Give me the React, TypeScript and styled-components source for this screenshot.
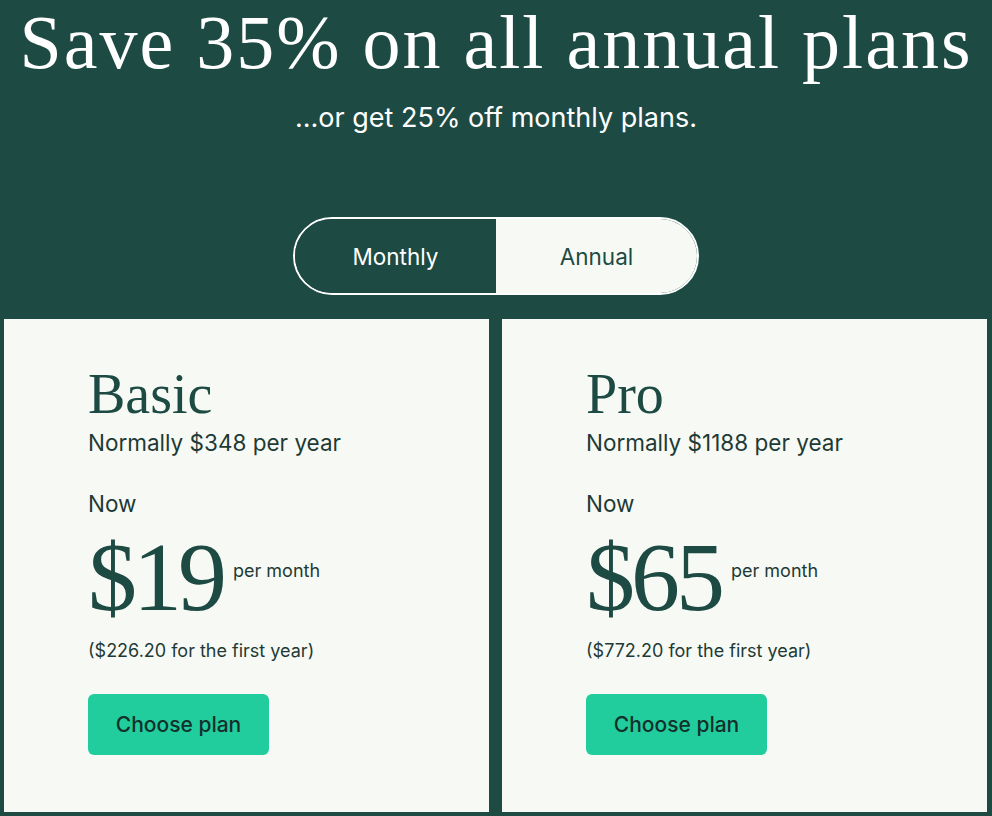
import styled, { createGlobalStyle } from 'styled-components';

const GlobalStyle = createGlobalStyle`
	html, body {
		margin: 0;
		padding: 0;
		background-color: #1d4a43;
	}
	* {
		box-sizing: border-box;
	}
`;

const plans = [
	{ name: 'Basic', normally: '$348', price: '$19', firstYear: '$226.20' },
	{ name: 'Pro', normally: '$1188', price: '$65', firstYear: '$772.20' },
];

const App = () => {
	return (
		<Page>
			<GlobalStyle />
			<Header>
				<Title>Save 35% on all annual plans</Title>
				<Subtitle>…or get 25% off monthly plans.</Subtitle>
			</Header>
			<Toggle>
				<ToggleOption active>Monthly</ToggleOption>
				<ToggleOption>Annual</ToggleOption>
			</Toggle>
			<Cards>
				{plans.map((plan) => (
					<Card key={plan.name}>
						<PlanName>{plan.name}</PlanName>
						<Normally>Normally {plan.normally} per year</Normally>
						<Now>Now</Now>
						<PriceRow>
							<Price>{plan.price}</Price>
							<PerMonth>per month</PerMonth>
						</PriceRow>
						<FirstYear>({plan.firstYear} for the first year)</FirstYear>
						<ChooseButton>Choose plan</ChooseButton>
					</Card>
				))}
			</Cards>
		</Page>
	);
};

export default App;

const Page = styled.div`
	width: 992px;
	height: 816px;
	background-color: #1d4a43;
	display: flex;
	flex-direction: column;
	align-items: center;
	font-family: Inter, 'Liberation Sans', sans-serif;
	overflow: hidden;
`;

const Header = styled.div`
	display: flex;
	flex-direction: column;
	align-items: center;
`;

const Title = styled.h1`
	margin: 0;
	font-family: 'Liberation Serif', serif;
	font-weight: 400;
	font-size: 76px;
	line-height: 84px;
	letter-spacing: 2px;
	color: #fff;
	white-space: nowrap;
`;

const Subtitle = styled.p`
	margin: 18px 0 0;
	font-size: 27px;
	line-height: 32px;
	color: #fff;
`;

const Toggle = styled.div`
	margin-top: 83px;
	width: 406px;
	height: 78px;
	display: flex;
	border: 2px solid #fff;
	border-radius: 39px;
	overflow: hidden;
`;

interface ToggleProps {
	active?: boolean;
}

const ToggleOption = styled.div<ToggleProps>`
	flex: 1;
	display: flex;
	align-items: center;
	justify-content: center;
	font-size: 22.5px;
	${(props) =>
		props.active
			? 'background-color: #1d4a43; color: #fff;'
			: 'background-color: #f7faf4; color: #1d4a43;'}
`;

const Cards = styled.div`
	margin-top: 24px;
	width: 100%;
	padding: 0 5px 4px 4px;
	display: grid;
	grid-template-columns: 1fr 1fr;
	gap: 13px;
	flex: 1;
`;

const Card = styled.div`
	background-color: #f7faf4;
	padding: 45px 0 0 84px;
	display: flex;
	flex-direction: column;
	align-items: flex-start;
	color: #1d4a43;
`;

const PlanName = styled.h2`
	margin: 0;
	font-family: 'Liberation Serif', serif;
	font-weight: 400;
	font-size: 56px;
	line-height: 60px;
`;

const Normally = styled.div`
	margin-top: 5px;
	font-size: 22.5px;
	line-height: 28px;
	color: #1f3a36;
`;

const Now = styled.div`
	margin-top: 33px;
	font-size: 22.5px;
	line-height: 28px;
	color: #1f3a36;
`;

const PriceRow = styled.div`
	display: flex;
	align-items: flex-start;
	gap: 10px;
`;

const Price = styled.div`
	font-family: 'Liberation Serif', serif;
	font-size: 98px;
	line-height: 118px;
	letter-spacing: -4px;
	color: #1d4a43;
`;

const PerMonth = styled.div`
	margin-top: 42px;
	font-size: 18px;
	line-height: 22px;
	color: #1f3a36;
`;

const FirstYear = styled.div`
	margin-top: 4px;
	font-size: 18px;
	line-height: 22px;
	color: #1f3a36;
`;

const ChooseButton = styled.button`
	margin-top: 32px;
	width: 181px;
	height: 61px;
	border: none;
	border-radius: 6px;
	background-color: #21cd9d;
	color: #14302b;
	font-family: Inter, 'Liberation Sans', sans-serif;
	font-size: 21px;
	font-weight: 500;
	cursor: pointer;
`;
